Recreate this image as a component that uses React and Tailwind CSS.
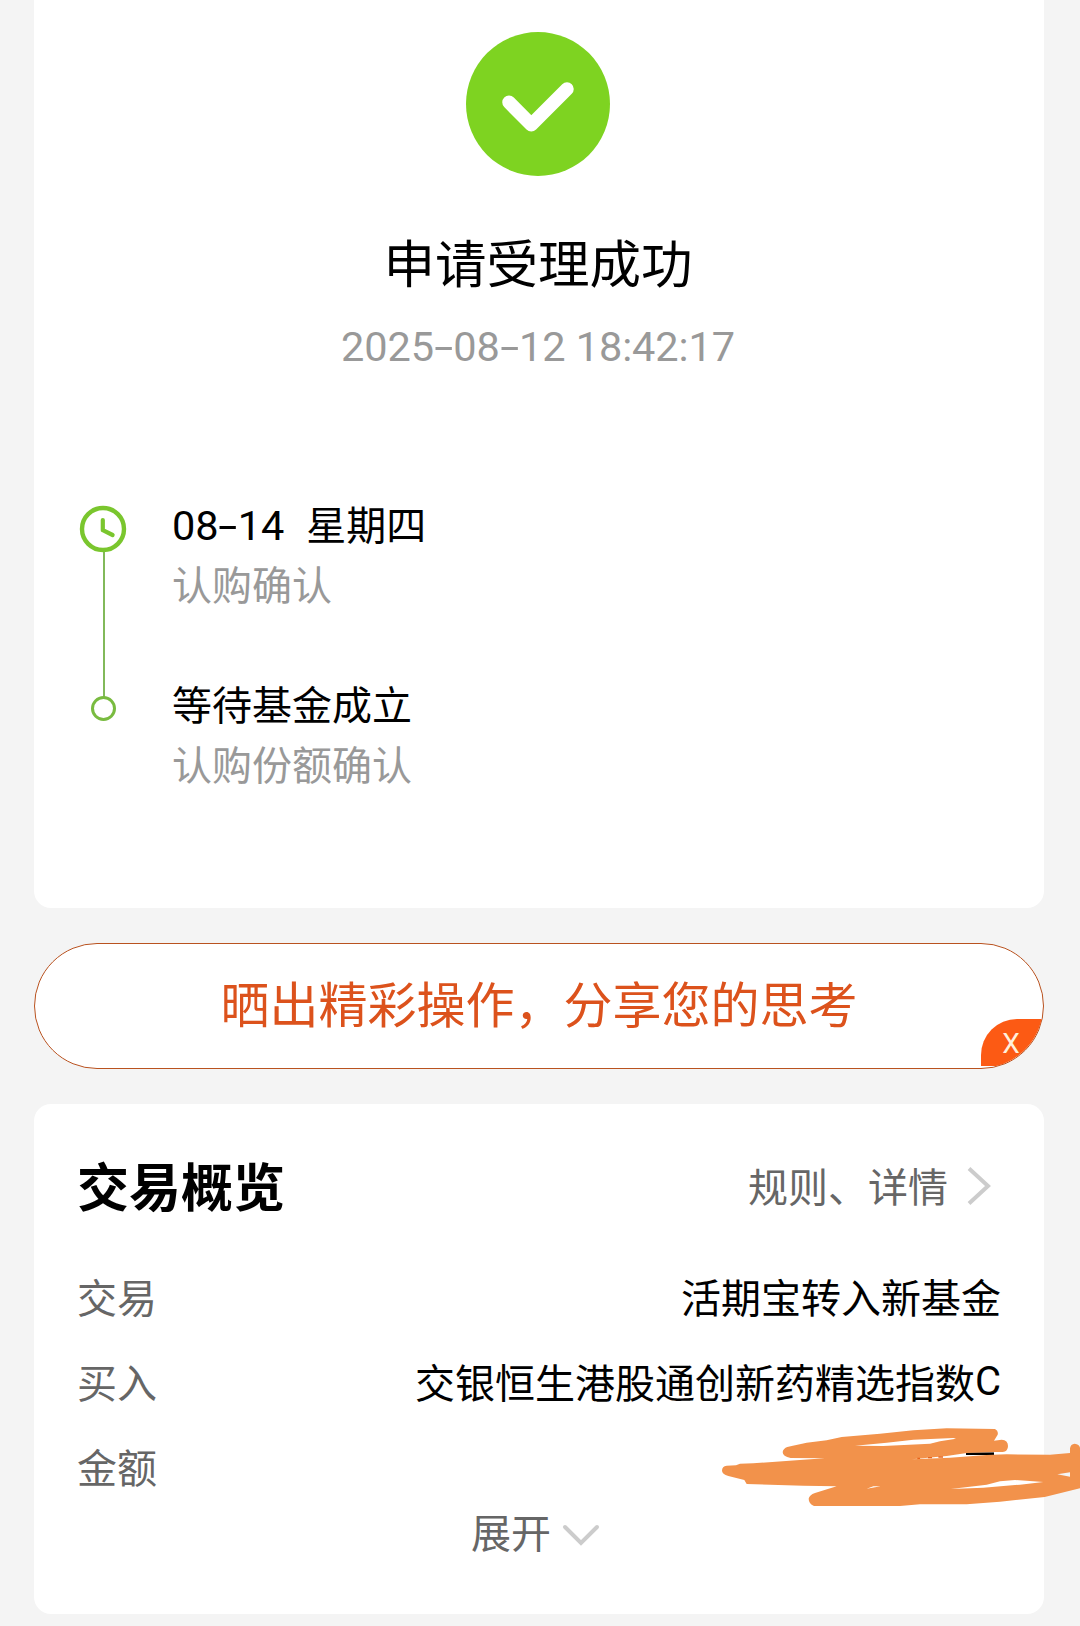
import React from 'react';

const STEPS = [
  { date: '08-14', title: '星期四', note: '认购确认' },
  { title: '等待基金成立', note: '认购份额确认' },
];

const ROWS = [
  { label: '交易', value: '活期宝转入新基金' },
  { label: '买入', value: '交银恒生港股通创新药精选指数', suffix: 'C' },
  { label: '金额', value: '元', masked: true },
];

// digits in Roboto, with the hyphens stretched to a wider dash
function Digits({ text }) {
  return (
    <span className="font-['Roboto',sans-serif] text-[41.5px] leading-none tracking-[-0.1px] whitespace-pre">
      {text.split('').map((c, i) =>
        c === '-' ? <span key={i} className="inline-block w-[19.3px] text-center"><span className="inline-block scale-x-[1.65]">-</span></span> : c
      )}
    </span>
  );
}

function SuccessIcon() {
  return (
    <svg width="144" height="144" viewBox="0 0 144 144" fill="none">
      <circle cx="72" cy="72" r="72" fill="#7ed321" />
      <path d="M43 70.3 65.3 92.8 101 57" stroke="#fff" strokeWidth="13.5" strokeLinecap="round" strokeLinejoin="round" />
    </svg>
  );
}

function TimelineTrack() {
  return (
    <svg width="48" height="220" viewBox="0 0 48 220" fill="none" className="shrink-0">
      <path d="M25 46V192" stroke="#82b95a" strokeWidth="2" />
      <circle cx="24" cy="24" r="21" stroke="#7ac62e" strokeWidth="4.4" />
      <path d="M23.8 15V25.2L33.6 30" stroke="#7ac62e" strokeWidth="4.2" strokeLinecap="round" strokeLinejoin="round" />
      <circle cx="24.5" cy="203.5" r="11" fill="#fff" stroke="#79bb40" strokeWidth="3" />
    </svg>
  );
}

function Scribble() {
  return (
    <svg width="380" height="130" viewBox="0 0 1140 390" className="absolute left-[666px] top-[296px]">
      <path
        fill="#f2924b"
        fillRule="evenodd"
        d="M66 212Q66 198 80 197L108 196 120 191 160 190 310 179 375 175 272 174Q248 170 248 156 250 145 262 141L275 138 320 128 380 121 425 111 540 101 640 91 740 85 885 87Q896 92 893 104L882 122 905 119Q924 120 924 138 924 155 908 156L884 156 800 159 740 168 636 178 750 173 860 165 920 163 1050 164 1110 159 1110 145Q1112 132 1124 131 1138 133 1140 143L1140 265 1034 291 900 305 800 313 660 313 600 318 342 318Q326 310 326 296 328 285 345 279L410 259 310 257 140 252 133 240 85 228Q66 222 66 212ZM465 137 550 138 690 131 720 124 768 116 760 114 640 119 560 128ZM752 267 850 263 960 254 1030 246 945 240 900 244 860 254ZM1072 223 1110 230 1110 217ZM500 266 542 259 520 259Z"
      />
      <path d="M652 175H660M684 173H696M715 171H729" stroke="#e8641c" strokeWidth="4" />
    </svg>
  );
}

export default function App() {
  return (
    <div className="h-[1626px] w-[1080px] overflow-hidden bg-[#f4f4f4] px-[34px] font-['Noto_Sans_CJK_SC',sans-serif] text-[40px] text-black">
      {/* Result */}
      <section className="flex h-[908px] w-[1010px] flex-col rounded-b-[17px] bg-white">
        <div className="flex flex-col items-center pt-8 pr-0.5">
          <SuccessIcon />
          <h1 className="mt-[50px] text-[51.5px] leading-[70px]">申请受理成功</h1>
          <p className="mt-[13px] h-[70px] leading-[70px] text-[#999]"><Digits text="2025-08-12 18:42:17" /></p>
        </div>
        <div className="mt-[114px] flex pl-[45px]">
          <div className="mt-[12px]"><TimelineTrack /></div>
          <ul className="ml-[45px] flex flex-col gap-[60px]">
            {STEPS.map(s => (
              <li key={s.title} className="leading-[60px]">
                <div className="flex h-[60px] items-center">
                  {s.date && <span className="mt-[6px] mr-[22px] flex"><Digits text={s.date} /></span>}
                  <span>{s.title}</span>
                </div>
                <div className="h-[60px] text-[#999]">{s.note}</div>
              </li>
            ))}
          </ul>
        </div>
      </section>

      {/* Share banner */}
      <button className="relative mt-[35px] flex h-[126px] w-[1010px] items-center justify-center overflow-hidden rounded-full border border-[#b9521f] bg-white pb-[8px] text-[49px] text-[#dc521c]">
        晒出精彩操作，分享您的思考
        <span className="absolute right-0 bottom-[2px] flex h-[47px] w-[62px] items-center justify-center rounded-tl-[36px] bg-[#fc5a14] pt-[2px] pr-[2px] font-['Roboto',sans-serif] text-[28px] text-[#fff0dc]">X</span>
      </button>

      {/* Overview */}
      <section className="relative mt-[35px] h-[510px] w-[1010px] rounded-[17px] bg-white px-[43px] pt-[46px]">
        <div className="flex h-[70px] items-center justify-between">
          <h2 className="text-[52px] leading-[70px] font-bold">交易概览</h2>
          <div className="flex items-center pr-[10px] text-[#666]">
            <span className="leading-[70px]">规则、详情</span>
            <svg width="26" height="42" viewBox="0 0 26 42" fill="none" className="mt-[2px] ml-[17px]">
              <path d="M4 3.5 23 21 4 38.5" stroke="#ccc" strokeWidth="4" />
            </svg>
          </div>
        </div>
        <dl className="mt-[33px]">
          {ROWS.map(r => (
            <div key={r.label} className="flex h-[85px] items-center justify-between">
              <dt className="text-[#666]">{r.label}</dt>
              <dd className={r.masked ? 'flex items-center pr-px pb-[8px] text-[39px]' : 'flex items-center'}>
                {r.value}
                {r.suffix && <span className="mt-[3px] font-['Roboto',sans-serif]">{r.suffix}</span>}
              </dd>
            </div>
          ))}
        </dl>
        <div className="mt-[-2px] flex h-[50px] items-center justify-center pr-[7px] text-[#666]">
          展开
          <svg width="38" height="24" viewBox="0 0 38 24" fill="none" className="mt-[7px] ml-[11px]">
            <path d="M3 4 19 20 35 4" stroke="#ccc" strokeWidth="4" strokeLinecap="round" />
          </svg>
        </div>
        {/* dash left showing above the mask */}
        <svg width="30" height="4" viewBox="0 0 30 4" className="absolute top-[348px] left-[931px]">
          <path d="M1 1.7H29" stroke="#000" strokeWidth="2.6" />
        </svg>
        <Scribble />
      </section>
    </div>
  );
}
